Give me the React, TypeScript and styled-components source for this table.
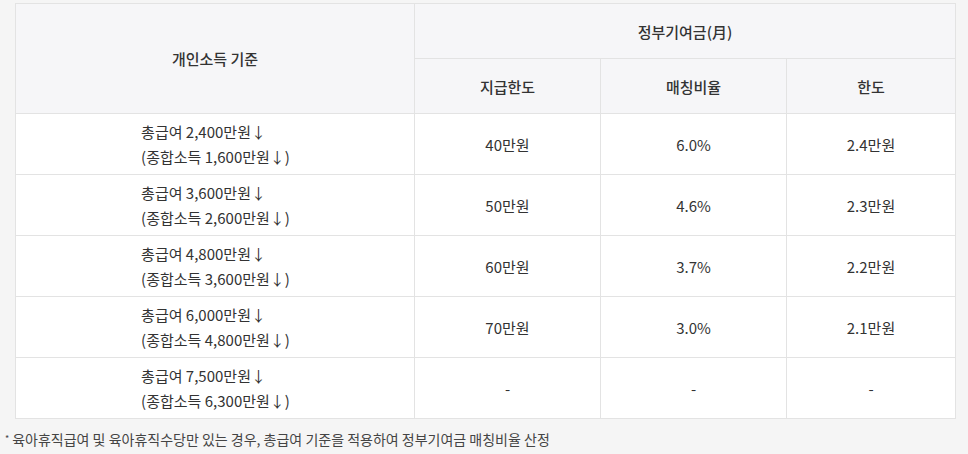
import styled, { createGlobalStyle } from 'styled-components';

const GlobalStyle = createGlobalStyle`
  html, body {
    margin: 0;
    padding: 0;
    background: #f5f5f5;
  }
  body {
    font-family: 'Noto Sans CJK KR', 'Noto Sans', sans-serif;
    color: #333;
  }
`;

const Page = styled.div`
  width: 968px;
  height: 454px;
  box-sizing: border-box;
  padding: 3px 13px 0 15px;
`;

const Table = styled.table`
  width: 940px;
  border-collapse: collapse;
  table-layout: fixed;
  background: #fff;
  font-size: 15px;

  th,
  td {
    border: 1px solid #e3e3e3;
    text-align: center;
    vertical-align: middle;
    padding: 0;
  }
`;

const Head = styled.th<{ $h: number }>`
  height: ${(p) => p.$h}px;
  background: #f6f6f8;
  font-weight: 500;
  color: #333;
`;

const Cell = styled.td`
  height: 60px;
  color: #333;
`;

const Criteria = styled.div`
  display: inline-block;
  text-align: left;
  line-height: 25px;
  margin-left: 1px;
`;

const Note = styled.p`
  margin: 10px 0 0 -10px;
  font-size: 14px;
  color: #444;

  sup {
    font-size: 9px;
    vertical-align: 3px;
    margin-right: 3px;
  }
`;

const rows = [
  { gross: '2,400', total: '1,600', limit: '40만원', rate: '6.0%', cap: '2.4만원' },
  { gross: '3,600', total: '2,600', limit: '50만원', rate: '4.6%', cap: '2.3만원' },
  { gross: '4,800', total: '3,600', limit: '60만원', rate: '3.7%', cap: '2.2만원' },
  { gross: '6,000', total: '4,800', limit: '70만원', rate: '3.0%', cap: '2.1만원' },
  { gross: '7,500', total: '6,300', limit: '-', rate: '-', cap: '-' },
];

export default function App() {
  return (
    <>
      <GlobalStyle />
      <Page>
        <Table>
          <colgroup>
            <col style={{ width: 399 }} />
            <col style={{ width: 186 }} />
            <col style={{ width: 186 }} />
            <col style={{ width: 169 }} />
          </colgroup>
          <thead>
            <tr>
              <Head $h={54} rowSpan={2}>개인소득 기준</Head>
              <Head $h={54} colSpan={3}>정부기여금(月)</Head>
            </tr>
            <tr>
              <Head $h={54}>지급한도</Head>
              <Head $h={54}>매칭비율</Head>
              <Head $h={54}>한도</Head>
            </tr>
          </thead>
          <tbody>
            {rows.map((r) => (
              <tr key={r.gross}>
                <Cell>
                  <Criteria>
                    총급여 {r.gross}만원↓
                    <br />
                    (종합소득 {r.total}만원↓)
                  </Criteria>
                </Cell>
                <Cell>{r.limit}</Cell>
                <Cell>{r.rate}</Cell>
                <Cell>{r.cap}</Cell>
              </tr>
            ))}
          </tbody>
        </Table>
        <Note>
          <sup>*</sup>육아휴직급여 및 육아휴직수당만 있는 경우, 총급여 기준을 적용하여 정부기여금 매칭비율 산정
        </Note>
      </Page>
    </>
  );
}
